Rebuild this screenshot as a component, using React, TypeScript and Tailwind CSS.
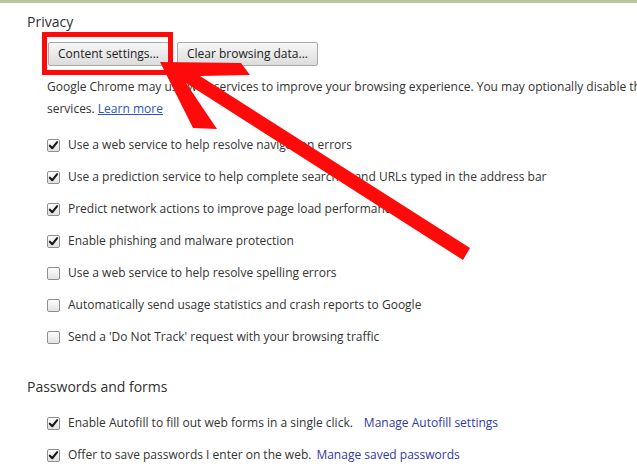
import React from 'react';

const font = { fontFamily: '"Open Sans", "Noto Sans", sans-serif' };

function Check({ on }: { on: boolean }) {
  return (
    <span className="relative flex h-[13px] w-[13px] shrink-0 items-center justify-center rounded-[2px] border border-[#8e8e8e] bg-gradient-to-b from-[#fdfdfd] to-[#e2e2e2]">
      {on && (
        <svg viewBox="0 0 12 12" className="h-[11px] w-[11px]">
          <path d="M2 6.2 L4.6 9 L10 2.4" fill="none" stroke="#1a1a1a" strokeWidth="2.3" strokeLinecap="round" strokeLinejoin="round" />
        </svg>
      )}
    </span>
  );
}

function Row({ on, children }: { on: boolean; children: React.ReactNode }) {
  return (
    <div className="flex h-[32px] items-center gap-[8px] whitespace-nowrap">
      <Check on={on} />
      <span>{children}</span>
    </div>
  );
}

const Btn = ({ children }: { children: React.ReactNode }) => (
  <button
    type="button"
    className="h-[24px] whitespace-nowrap rounded-[2px] border border-[#a9a9a9] bg-gradient-to-b from-[#f7f7f7] to-[#dcdcdc] px-[9px] text-[12px] text-[#1c1c1c]"
  >
    {children}
  </button>
);

export default function App() {
  return (
    <div style={font} className="relative h-[469px] w-[637px] overflow-hidden border-t-[3px] border-[#b6c99c] bg-white text-[12px] text-[#333]">
      <div className="pl-[27px] pt-[9px]">
        <h2 className="text-[14px] leading-[20px] text-[#303030]">Privacy</h2>
        <div className="ml-[21px] mt-[10px] flex gap-[8px]">
          <Btn>Content settings...</Btn>
          <Btn>Clear browsing data...</Btn>
        </div>
        <div className="ml-[20px] mt-[10px] whitespace-nowrap leading-[22px]">
          <div>Google Chrome may use web services to improve your browsing experience. You may optionally disable these</div>
          <div>
            services. <span className="text-[#2a54b8] underline">Learn more</span>
          </div>
        </div>
        <div className="ml-[20px] mt-[9px]">
          <Row on>Use a web service to help resolve navigation errors</Row>
          <Row on>Use a prediction service to help complete searches and URLs typed in the address bar</Row>
          <Row on>Predict network actions to improve page load performance</Row>
          <Row on>Enable phishing and malware protection</Row>
          <Row on={false}>Use a web service to help resolve spelling errors</Row>
          <Row on={false}>Automatically send usage statistics and crash reports to Google</Row>
          <Row on={false}>Send a 'Do Not Track' request with your browsing traffic</Row>
        </div>
        <h2 className="mt-[24px] text-[14px] leading-[20px] text-[#303030]">Passwords and forms</h2>
        <div className="ml-[20px] mt-[10px]">
          <Row on>
            Enable Autofill to fill out web forms in a single click.
            <span className="ml-[11px] text-[#3038a8]">Manage Autofill settings</span>
          </Row>
          <Row on>
            Offer to save passwords I enter on the web.
            <span className="ml-[5px] text-[#3038a8]">Manage saved passwords</span>
          </Row>
        </div>
      </div>

      <div className="absolute left-[42px] top-[29px] h-[43px] w-[131px] border-[5px] border-[#fe0a0a]" />
      <svg className="pointer-events-none absolute left-0 top-0" width="637" height="469">
        <polygon
          fill="#fe0a0a"
          points="160,59 241,60 250,72 200,73 470,245 463,257 186,80 217,126 193,125"
        />
      </svg>
    </div>
  );
}
